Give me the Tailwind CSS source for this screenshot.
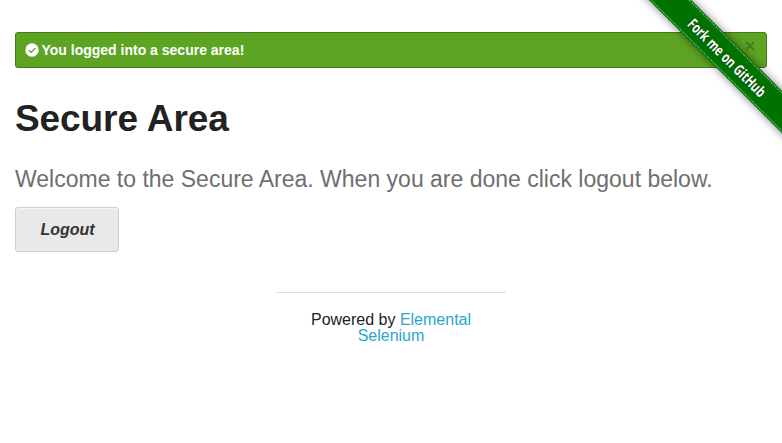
<!DOCTYPE html>
<html lang="en"><head><meta charset="utf-8"><title>Secure Area</title>
<script src="https://cdn.jsdelivr.net/npm/@tailwindcss/browser@4"></script></head>
<body class="relative h-[443px] overflow-hidden bg-white px-[15px] pt-8 font-['Liberation_Sans',Arial,sans-serif] text-[#222]">
<div class="flex h-9 items-center rounded-[3px] border border-[#457a1a] bg-[#5da423] pl-[9px] pr-[11px] text-sm font-bold text-white">
<svg class="mr-[2.5px] size-[14px]" viewBox="0 0 14 14"><circle cx="7" cy="7" r="6.7" fill="white"/><path d="M3.8 7.1 6.1 9.3 10.4 5.1" fill="none" stroke="#5da423" stroke-width="1.3"/></svg>
<span>You logged into a secure area!</span>
<svg class="ml-auto size-[10px] -mt-[9px]" viewBox="0 0 10 10"><path d="M1 1 9 9M9 1 1 9" stroke="#477d20" stroke-width="2"/></svg></div>
<h2 class="mt-[25px] text-[37px] leading-[52px] font-bold tracking-[-0.08px]">Secure Area</h2>
<h4 class="mt-[18px] text-[23px] leading-8 text-[#6f6f6f] whitespace-nowrap">Welcome to the Secure Area. When you are done click logout below.</h4>
<a class="mt-3 flex h-[45px] w-[104px] items-center justify-center rounded-[3px] border border-[#d0d0d0] bg-[#e9e9e9] pl-px text-base font-bold italic text-[#333] shadow-[inset_0_1px_0_rgb(255_255_255/0.5)]">Logout</a>
<footer class="ml-[261px] mt-10 w-[230px] border-t border-[#ddd] px-6 pt-[19px] text-center text-base leading-4">Powered by <a class="text-[#2ba6cb]">Elemental Selenium</a></footer>
<div class="absolute right-[-55px] top-[42px] h-[30px] w-[220px] rotate-45 bg-[#007200] py-px shadow-[0_0_8px_rgb(0_0_0/0.5)]">
<div class="flex h-7 items-center justify-center border-y border-dotted border-[#a5d3a5]"><span class="block scale-x-[0.735] whitespace-nowrap font-['Open_Sans',sans-serif] text-[15px] font-bold text-white text-shadow-[0_0_2px_rgb(0_0_0/0.7)]">Fork me on GitHub</span></div></div>
</body></html>
